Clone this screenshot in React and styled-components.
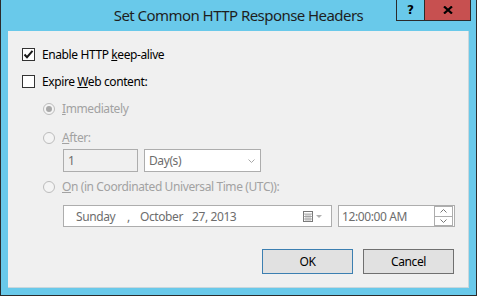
import React from 'react';
import styled, { createGlobalStyle } from 'styled-components';

const Global = createGlobalStyle`
  html, body { margin: 0; padding: 0; background: #69c9ea; }
  body { width: 477px; height: 296px; overflow: hidden; font-family: "Noto Sans", "Open Sans", sans-serif; }
  * { box-sizing: border-box; }
`;

const Win = styled.div`
  width: 477px;
  height: 296px;
  background: #69c9ea;
  border: 1px solid #2b2b2b;
  border-top: none;
  display: flex;
  flex-direction: column;
`;

const TitleBar = styled.div`
  height: 31px;
  flex: none;
  display: grid;
  grid-template-columns: 1fr auto 1fr;
  align-items: start;
`;

const Title = styled.div`
  grid-column: 2;
  padding-top: 5px;
  font-size: 15px;
  letter-spacing: -0.55px;
  line-height: 20px;
  color: #1e1e1e;
  white-space: nowrap;
`;

const Caption = styled.div`
  grid-column: 3;
  justify-self: end;
  display: flex;
  margin-right: 5px;
`;

const CapBtn = styled.div`
  width: ${p => p.$w}px;
  height: 21px;
  margin-left: ${p => (p.$joined ? -1 : 0)}px;
  border: 1px solid #2b2b2b;
  border-top: none;
  background: ${p => p.$bg};
  display: flex;
  align-items: center;
  justify-content: center;
  font-family: "DejaVu Sans", sans-serif;
  font-weight: bold;
  font-size: 12px;
  color: #000;
`;

const Client = styled.div`
  margin: 0 7px;
  height: 257px;
  background: #f0f0f0;
  border-right: 1px solid #c9d7dc;
  border-bottom: 1px solid #c9d7dc;
  padding: 15px 0 0 14px;
  display: flex;
  flex-direction: column;
  font-size: 12px;
  letter-spacing: -0.4px;
  color: #000;
`;

const Row = styled.div`
  display: flex;
  align-items: center;
  height: ${p => p.$h || 17}px;
  margin-top: ${p => p.$mt || 0}px;
  margin-left: ${p => p.$ml || 0}px;
  gap: ${p => p.$gap ?? 7}px;
  color: ${p => (p.$disabled ? '#a2a2a2' : '#000')};
  white-space: nowrap;
`;

const CheckBox = styled.span`
  width: 13px;
  height: 13px;
  flex: none;
  border: 1px solid #333;
  background: #fff;
  display: flex;
  align-items: center;
  justify-content: center;
`;

const Radio = styled.span`
  width: 12px;
  height: 12px;
  flex: none;
  border-radius: 50%;
  border: 1px solid #bcbcbc;
  background: #f4f4f4;
  display: flex;
  align-items: center;
  justify-content: center;
  &::after {
    content: '';
    display: ${p => (p.$on ? 'block' : 'none')};
    width: 6px;
    height: 6px;
    border-radius: 50%;
    background: #a8a8a8;
  }
`;

const Field = styled.div`
  height: ${p => p.$h || 23}px;
  width: ${p => p.$w}px;
  border: 1px solid #adadad;
  background: ${p => (p.$gray ? '#f0f0f0' : '#fff')};
  color: #6d6d6d;
  display: flex;
  align-items: center;
  padding-left: ${p => p.$pl ?? 4}px;
  padding-right: ${p => p.$pr ?? 0}px;
  font-size: 12px;
`;

const Grow = styled.span`
  flex: 1;
`;

const DatePart = styled.span`
  width: ${p => p.$w}px;
  flex: none;
`;

const Spin = styled.div`
  width: 19px;
  height: 20px;
  display: flex;
  flex-direction: column;
`;

const SpinBtn = styled.div`
  flex: 1;
  border: 1px solid #adadad;
  margin-top: ${p => (p.$second ? -1 : 0)}px;
  background: #fff;
  display: flex;
  align-items: center;
  justify-content: center;
`;

const Buttons = styled.div`
  display: flex;
  justify-content: flex-end;
  gap: 10px;
  margin-top: 22px;
  margin-right: 14px;
`;

const Btn = styled.div`
  width: 91px;
  height: 25px;
  border: 1px solid ${p => (p.$default ? '#3c7fb1' : '#707070')};
  background: #e1e1e1;
  display: flex;
  align-items: center;
  justify-content: center;
  font-size: 12px;
  color: #000;
`;

const Check = () => (
  <svg width="11" height="11" viewBox="0 0 11 11">
    <path d="M1.5 5.5 L4 8.2 L9.5 1.8" fill="none" stroke="#1a1a1a" strokeWidth="2" />
  </svg>
);

const CloseX = () => (
  <svg width="10" height="8" viewBox="0 0 10 8">
    <path d="M1 0.5 L9 7.5 M9 0.5 L1 7.5" stroke="#000" strokeWidth="2.2" />
  </svg>
);

const Chevron = ({ up, color = '#8a8a8a' }) => (
  <svg width="7" height="4" viewBox="0 0 7 4">
    <path d={up ? 'M0.5 3.5 L3.5 0.5 L6.5 3.5' : 'M0.5 0.5 L3.5 3.5 L6.5 0.5'} fill="none" stroke={color} strokeWidth="1" />
  </svg>
);

const CalIcon = () => (
  <svg width="20" height="11" viewBox="0 0 20 11">
    <rect x="0.5" y="0.5" width="9" height="10" fill="#fff" stroke="#777" />
    <path d="M0.5 3 H9.5 M0.5 5.5 H9.5 M0.5 8 H9.5 M3 3 V10.5 M5 3 V10.5 M7 3 V10.5" stroke="#999" strokeWidth="0.8" />
    <path d="M13 4 L19 4 L16 7 Z" fill="#b0b0b0" />
  </svg>
);

export default function App() {
  return (
    <>
      <Global />
      <Win>
        <TitleBar>
          <Title>Set Common HTTP Response Headers</Title>
          <Caption>
            <CapBtn $w={29} $bg="#69c9ea">?</CapBtn>
            <CapBtn $w={47} $bg="#c75050" $joined>
              <CloseX />
            </CapBtn>
          </Caption>
        </TitleBar>
        <Client>
          <Row>
            <CheckBox>
              <Check />
            </CheckBox>
            <span>
              Enable HTTP <u>k</u>eep-alive
            </span>
          </Row>
          <Row $mt={10}>
            <CheckBox />
            <span>
              Expire <u>W</u>eb content:
            </span>
          </Row>
          <Row $mt={10} $ml={21} $disabled>
            <Radio $on />
            <span>
              <u>I</u>mmediately
            </span>
          </Row>
          <Row $mt={12} $ml={21} $disabled>
            <Radio />
            <span>
              <u>A</u>fter:
            </span>
          </Row>
          <Row $h={23} $mt={3} $ml={41} $gap={6}>
            <Field $w={75} $gray>1</Field>
            <Field $w={117} $pr={5}>
              <Grow>Day(s)</Grow>
              <Chevron color="#a8a8a8" />
            </Field>
          </Row>
          <Row $mt={6} $ml={21} $disabled>
            <Radio />
            <span>
              <u>O</u>n (in Coordinated Universal Time (UTC)):
            </span>
          </Row>
          <Row $h={22} $mt={10} $ml={41} $gap={6}>
            <Field $w={269} $h={22} $pl={12} $pr={8}>
              <DatePart $w={51}>Sunday</DatePart>
              <DatePart $w={13}>,</DatePart>
              <DatePart $w={52}>October</DatePart>
              <Grow>27, 2013</Grow>
              <CalIcon />
            </Field>
            <Field $w={117} $h={22} $pl={3} $pr={1}>
              <Grow>12:00:00 AM</Grow>
              <Spin>
                <SpinBtn>
                  <Chevron up color="#777" />
                </SpinBtn>
                <SpinBtn $second>
                  <Chevron color="#777" />
                </SpinBtn>
              </Spin>
            </Field>
          </Row>
          <Buttons>
            <Btn $default>OK</Btn>
            <Btn>Cancel</Btn>
          </Buttons>
        </Client>
      </Win>
    </>
  );
}
